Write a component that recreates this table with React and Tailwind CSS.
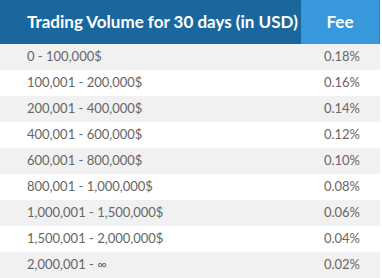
import React from "react";

const rows = [
  ["0 - 100,000$", "0.18%"],
  ["100,001 - 200,000$", "0.16%"],
  ["200,001 - 400,000$", "0.14%"],
  ["400,001 - 600,000$", "0.12%"],
  ["600,001 - 800,000$", "0.10%"],
  ["800,001 - 1,000,000$", "0.08%"],
  ["1,000,001 - 1,500,000$", "0.06%"],
  ["1,500,001 - 2,000,000$", "0.04%"],
  ["2,000,001 - ∞", "0.02%"],
];

export default function App() {
  return (
    <div className="w-[382px] h-[278px] bg-white overflow-hidden" style={{ fontFamily: "Lato, 'Open Sans', sans-serif" }}>
      <div className="w-[380px]">
        <div className="flex h-[44px]">
          <div className="w-[301px] bg-[#1a679e] text-white font-bold text-[17px] flex items-center pl-[27px]">
            Trading Volume for 30 days (in USD)
          </div>
          <div className="flex-1 bg-[#3799dc] text-white font-bold text-[17px] flex items-center justify-center border-r border-[#2d86c4]">
            Fee
          </div>
        </div>
        {rows.map(([a, b], i) => (
          <div key={i} className={`flex h-[26px] items-center text-[13px] text-[#666] ${i % 2 === 0 ? "bg-[#f1f1f1]" : "bg-white"}`}>
            <div className="w-[301px] pl-[27px]">{a}</div>
            <div className="flex-1 text-right pr-[20px]">{b}</div>
          </div>
        ))}
      </div>
    </div>
  );
}
